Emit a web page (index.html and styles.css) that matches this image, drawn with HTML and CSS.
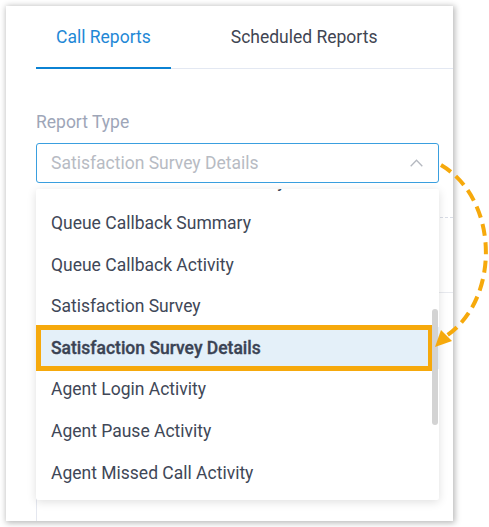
FILE: index.html
```html
<!DOCTYPE html>
<html>
<head>
<meta charset="utf-8">
<link rel="stylesheet" href="styles.css">
</head>
<body>
<div class="card">
  <div class="tabs">
    <div class="tab active">Call Reports</div>
    <div class="tab">Scheduled Reports</div>
  </div>
  <div class="form">
    <div class="label">Report Type</div>
    <div class="field">
      <div class="select">
        <span class="placeholder">Satisfaction Survey Details</span>
        <svg class="chevron" width="13" height="8" viewBox="0 0 13 8"><path d="M0.7 7.3 L6.5 1.2 L12.3 7.3" fill="none" stroke="#b5b9c0" stroke-width="1.3"/></svg>
      </div>
      <div class="behind">
        <div class="divider"></div>
        <div class="table"></div>
      </div>
      <div class="dropdown">
        <ul class="list">
          <li class="item">Queue Performance Summary</li>
          <li class="item">Queue Callback Summary</li>
          <li class="item">Queue Callback Activity</li>
          <li class="item">Satisfaction Survey</li>
          <li class="item selected">Satisfaction Survey Details</li>
          <li class="item">Agent Login Activity</li>
          <li class="item">Agent Pause Activity</li>
          <li class="item">Agent Missed Call Activity</li>
        </ul>
        <div class="thumb"></div>
      </div>
    </div>
  </div>
</div>
<svg class="arrow" width="489" height="527" viewBox="0 0 489 527">
  <path d="M441 165 C500 200 500 300 446 336" fill="none" stroke="#f6a90c" stroke-width="4" stroke-dasharray="12 6.5"/>
  <polygon points="435,347 441,330 452,341" fill="#f6a90c"/>
</svg>
</body>
</html>
```
FILE: styles.css
```css
* { box-sizing: border-box; }
html, body { margin: 0; padding: 0; background: #fff; }
body {
  font-family: Roboto, "Liberation Sans", sans-serif;
  width: 489px;
  height: 527px;
  padding: 6px 0 0 6px;
  position: relative;
  overflow: hidden;
}
.card {
  width: 447px;
  height: 515px;
  background: #fff;
  box-shadow: 1px 1px 6px 1px rgba(0, 0, 0, 0.28);
  overflow: hidden;
  display: flex;
  flex-direction: column;
}
.tabs {
  display: flex;
  margin-left: 30px;
  height: 63px;
  border-bottom: 1px solid #e3e8f2;
  gap: 40px;
}
.tab {
  position: relative;
  padding: 0 20px;
  display: flex;
  align-items: center;
  font-size: 17.5px;
  color: #3f4552;
  height: 62px;
}
.tab.active { color: #1f88d6; }
.tab.active::after {
  content: "";
  position: absolute;
  left: 0;
  right: 0;
  bottom: -1px;
  height: 2px;
  background: #0b82d3;
}
.form {
  flex: 1;
  display: flex;
  flex-direction: column;
  padding-left: 30px;
}
.label {
  margin-top: 43px;
  height: 20px;
  line-height: 20px;
  font-size: 17.5px;
  color: #9ea6b8;
}
.field {
  position: relative;
  margin-top: 11px;
  flex: 1;
  display: flex;
  flex-direction: column;
}
.select {
  width: 403px;
  height: 40px;
  border: 1px solid #3a9fdf;
  border-radius: 3px;
  display: flex;
  align-items: center;
  justify-content: space-between;
  padding: 0 15px 0 14px;
}
.placeholder {
  font-size: 17.5px;
  color: #b7bbc3;
}
.chevron { display: block; }
.behind {
  flex: 1;
  display: flex;
  flex-direction: column;
}
.divider {
  height: 35px;
  border-bottom: 1px dashed #d9dde6;
}
.table {
  margin-top: 74px;
  flex: 1;
  border-top: 1px solid #e8eaef;
  border-left: 1px solid #e4e7ef;
}
.dropdown {
  position: absolute;
  left: 0;
  top: 46px;
  width: 403px;
  height: 311px;
  background: #fff;
  box-shadow: 0 2px 10px rgba(0, 0, 0, 0.13);
  overflow: hidden;
  border-radius: 2px;
}
.list {
  list-style: none;
  margin: -28.4px 0 0 0;
  padding: 0;
}
.item {
  position: relative;
  height: 41.6px;
  display: flex;
  align-items: center;
  padding-left: 15px;
  font-size: 17.5px;
  color: #404757;
}
.item.selected {
  background: #e4f0f9;
  font-weight: 500;
  -webkit-text-stroke: 0.35px #3a4354;
  color: #3a4354;
}
.item.selected::after {
  content: "";
  position: absolute;
  left: 0;
  right: 6px;
  top: -2px;
  bottom: -2px;
  border: 5px solid #f6a90c;
}
.thumb {
  position: absolute;
  right: 1px;
  top: 120px;
  width: 6px;
  height: 116px;
  border-radius: 3px;
  background: #d3d3d3;
}
.arrow {
  position: absolute;
  left: 0;
  top: 0;
  pointer-events: none;
}
```
